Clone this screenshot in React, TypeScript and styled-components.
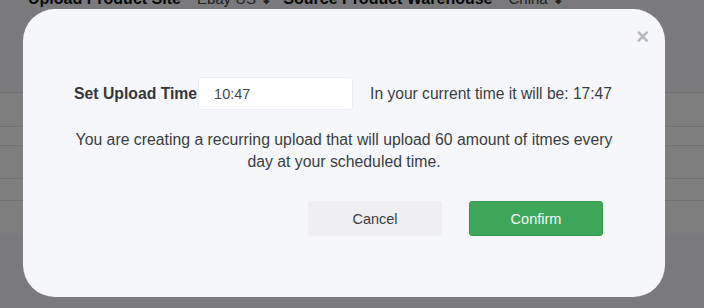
import styled, { createGlobalStyle } from 'styled-components';

const GlobalStyle = createGlobalStyle`
  html, body {
    margin: 0;
    padding: 0;
    background: #f4f5f9;
    font-family: 'Liberation Sans', Arial, sans-serif;
    overflow: hidden;
  }
`;

const rows = [
  { height: 33, shade: '#fbfbfc' },
  { height: 18, shade: '#fff' },
  { height: 32, shade: '#fbfbfc' },
  { height: 21, shade: '#fff' },
  { height: 32, shade: '#fbfbfc' },
];

export default function App() {
  return (
    <>
      <GlobalStyle />
      <StyledPage>
        <div className='page__filters'>
          <span className='page__filters--label'>Upload Product Site</span>
          <span className='page__filters--value'>Ebay US ⬍</span>
          <span className='page__filters--label'>Source Product Warehouse</span>
          <span className='page__filters--value'>China ⬍</span>
        </div>
        <div className='page__table'>
          {rows.map((row, index) => (
            <TableRow key={index} $height={row.height} $shade={row.shade} />
          ))}
        </div>
      </StyledPage>

      <Overlay>
        <Modal>
          <CloseButton aria-label='close'>×</CloseButton>
          <TimeRow>
            <Label>Set Upload Time</Label>
            <TimeInput defaultValue='10:47' />
            <Hint>In your current time it will be: 17:47</Hint>
          </TimeRow>
          <Message>
            You are creating a recurring upload that will upload 60 amount of
            itmes every day at your scheduled time.
          </Message>
          <Actions>
            <Button>Cancel</Button>
            <Button $primary>Confirm</Button>
          </Actions>
        </Modal>
      </Overlay>
    </>
  );
}

const StyledPage = styled.div`
  margin-top: -10px;
  height: 320px;
  background: #f4f5f9;

  .page__filters {
    display: flex;
    align-items: baseline;
    padding-left: 28px;
    height: 26px;
    line-height: 18px;
    font-size: 16px;
    color: #111;

    .page__filters--label {
      font-weight: bold;
      margin-right: 16px;
    }
    .page__filters--value {
      font-size: 15px;
      color: #444;
      margin-right: 10px;
    }
  }

  .page__table {
    margin-top: 76px;
    background: #fff;
  }
`;

const TableRow = styled.div<{ $height: number; $shade: string }>`
  height: ${(p) => p.$height}px;
  background: ${(p) => p.$shade};
  border-top: 1px solid #e2e2e6;
`;

const Overlay = styled.div`
  position: fixed;
  inset: 0;
  background: rgba(0, 0, 0, 0.5);
  display: flex;
  align-items: flex-start;
  padding: 9px 0 0 23px;
`;

const Modal = styled.div`
  position: relative;
  box-sizing: border-box;
  width: 642px;
  height: 288px;
  background: #f6f7fb;
  border-radius: 32px;
  padding: 68px 51px 0 51px;
  display: flex;
  flex-direction: column;
`;

const CloseButton = styled.span`
  position: absolute;
  top: 17px;
  right: 16px;
  font-size: 22px;
  line-height: 22px;
  color: #b8b9bd;
  font-weight: bold;
`;

const TimeRow = styled.div`
  display: flex;
  align-items: center;
  height: 33px;
`;

const Label = styled.span`
  font-size: 15.75px;
  font-weight: bold;
  color: #33363b;
  margin-right: 1px;
  white-space: nowrap;
`;

const TimeInput = styled.input`
  box-sizing: border-box;
  width: 155px;
  height: 33px;
  flex-shrink: 0;
  border: 1px solid #eceef2;
  border-radius: 3px;
  background: #fff;
  padding: 0 0 0 15px;
  font-family: 'Liberation Sans', Arial, sans-serif;
  font-size: 14.5px;
  color: #44474c;
  outline: none;
`;

const Hint = styled.span`
  margin-left: 17px;
  font-size: 15.6px;
  color: #3a3d42;
  white-space: nowrap;
`;

const Message = styled.p`
  margin: 19px -4px 0 -4px;
  font-size: 15.8px;
  line-height: 22px;
  color: #3a3d42;
  text-align: center;
`;

const Actions = styled.div`
  display: flex;
  justify-content: flex-end;
  gap: 27px;
  margin: 28px 11px 0 0;
`;

const Button = styled.button<{ $primary?: boolean }>`
  width: 134px;
  height: 35px;
  border: ${(p) => (p.$primary ? '1px solid #36994f' : 'none')};
  border-radius: 3px;
  background: ${(p) => (p.$primary ? '#3ea75b' : '#efeff2')};
  color: ${(p) => (p.$primary ? '#f2fbf4' : '#3a3d42')};
  font-family: 'Liberation Sans', Arial, sans-serif;
  font-size: 14.5px;
  cursor: pointer;
`;
